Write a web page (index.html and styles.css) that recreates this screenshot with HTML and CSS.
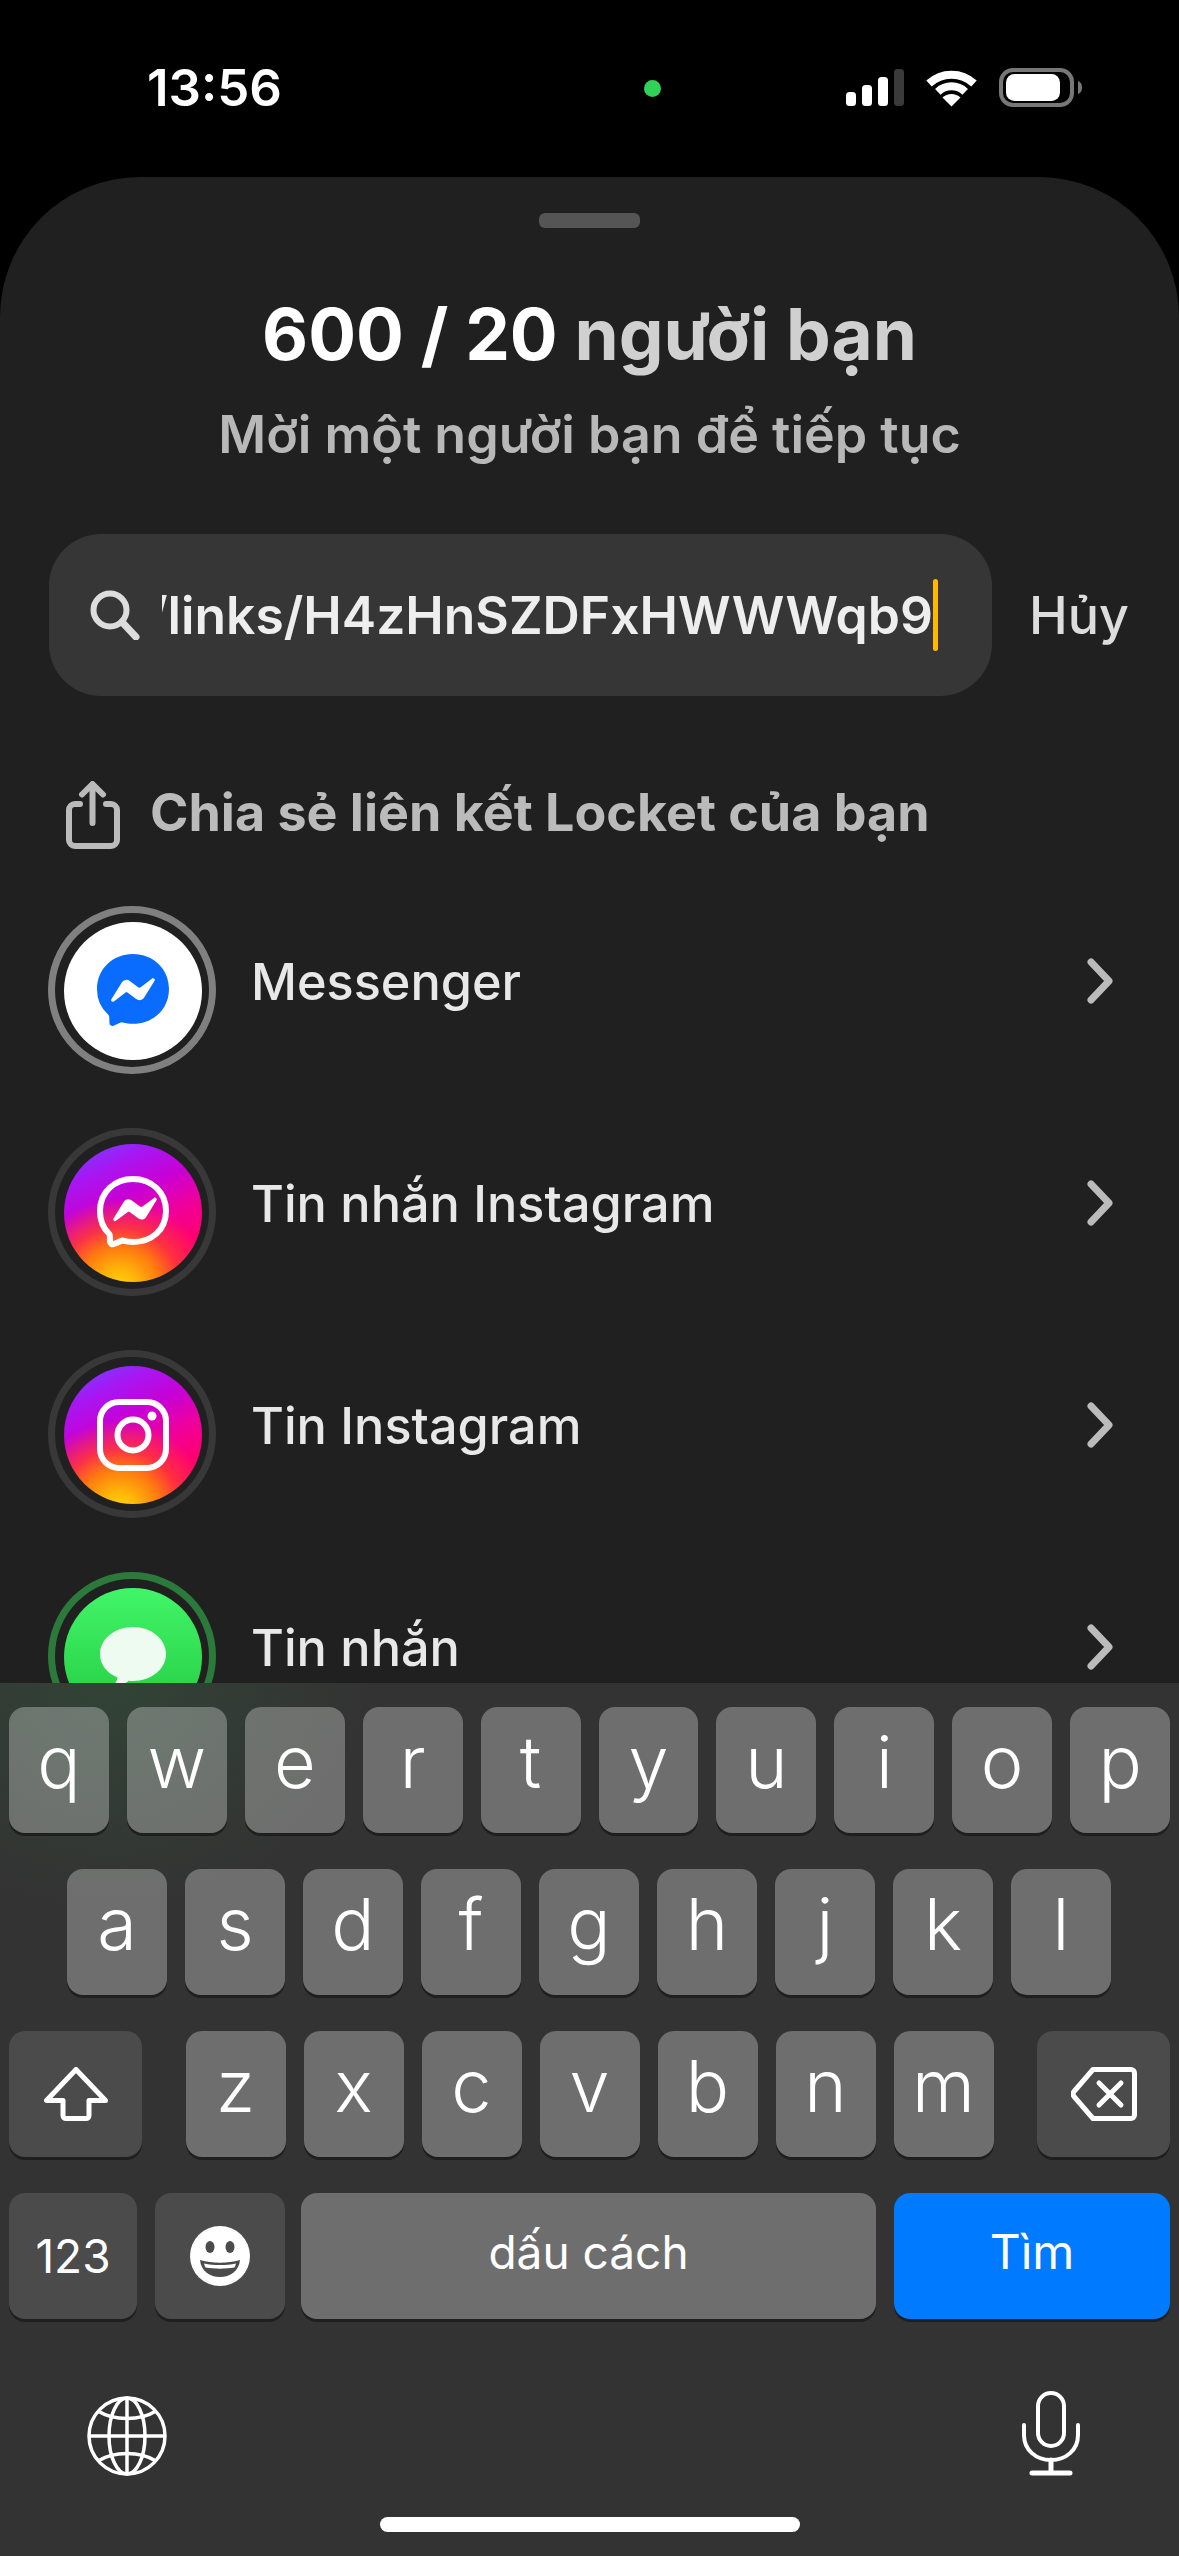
FILE: index.html
```html
<!DOCTYPE html>
<html lang="vi">
<head>
<meta charset="utf-8">
<title>Locket</title>
<link rel="stylesheet" href="styles.css">
</head>
<body>
<div class="page">
  <header class="status">
    <span class="time">13:56</span>
    <span class="dot"></span>
    <svg class="status-icons" width="240" height="45" viewBox="846 66 240 45">
      <rect x="846" y="92" width="10" height="14" rx="3.5" fill="#fff"/>
      <rect x="862" y="85" width="10" height="21" rx="3.5" fill="#fff"/>
      <rect x="878" y="77" width="10" height="29" rx="3.5" fill="#fff"/>
      <rect x="894" y="69" width="10" height="37" rx="3.5" fill="#3a3a3a"/>
      <g fill="none" stroke="#fff" stroke-width="8">
        <path d="M929 83.5a33 33 0 0 1 45 0"/>
        <path d="M937.8 91.8a20 20 0 0 1 27.4 0"/>
      </g>
      <path d="M951.5 106.5l-9-9a13 13 0 0 1 18 0z" fill="#fff"/>
      <rect x="1001" y="70" width="71" height="35" rx="12" fill="none" stroke="#777" stroke-width="4"/>
      <rect x="1006" y="74" width="54" height="27" rx="8.5" fill="#fff"/>
      <path d="M1078 81c3 1 4 3.500 4 6.500s-1 5.500-4 6.500z" fill="#777"/>
    </svg>
  </header>

  <main class="sheet">
    <div class="handle"></div>
    <h1 class="title"><span class="count">600 / 20</span> người bạn</h1>
    <p class="subtitle">Mời một người bạn để tiếp tục</p>

    <div class="search-row">
      <div class="search">
        <svg class="search-icon" width="50" height="50" viewBox="0 0 50 50">
          <circle cx="20" cy="20" r="16.500" fill="none" stroke="#ddd" stroke-width="6"/>
          <path d="M32 32l14 15" fill="none" stroke="#ddd" stroke-width="7" stroke-linecap="round"/>
        </svg>
        <div class="search-field"><span class="search-text">https://locket.camera/links/H4zHnSZDFxHWWWqb9</span></div>
        <span class="caret"></span>
      </div>
      <span class="cancel">Hủy</span>
    </div>

    <div class="share">
      <svg class="share-icon" width="54" height="68" viewBox="0 0 54 68">
        <path d="M14 23H9a6 6 0 0 0-6 6v30a6 6 0 0 0 6 6h36a6 6 0 0 0 6-6V29a6 6 0 0 0-6-6h-5" fill="none" stroke="#bbb" stroke-width="6" stroke-linecap="round"/>
        <path d="M26.500 42V4M16 13.500L26.500 3 37 13.500" fill="none" stroke="#bbb" stroke-width="6" stroke-linecap="round" stroke-linejoin="round"/>
      </svg>
      <span class="share-text">Chia sẻ liên kết Locket của bạn</span>
    </div>

    <ul class="apps">
      <li class="app">
        <div class="ring ring-grey"><div class="badge badge-white">
          <svg width="72" height="75" viewBox="0 0 24 25"><path fill="#0a6cff" fill-rule="evenodd" d="M.001 11.639C.001 4.949 5.241 0 12.001 0S24 4.95 24 11.639c0 6.689-5.24 11.638-12 11.638-1.21 0-2.38-.16-3.47-.46a.96.96 0 0 0-.64.05l-2.39 1.05a.96.96 0 0 1-1.35-.85l-.07-2.14a.97.97 0 0 0-.32-.68A11.39 11.389 0 0 1 .002 11.64zm8.32-2.19l-3.52 5.6c-.35.53.32 1.139.82.75l3.79-2.87c.25-.2.6-.2.86 0l2.8 2.1c.84.63 2.04.4 2.6-.48l3.52-5.6c.35-.53-.32-1.13-.82-.75l-3.79 2.87c-.25.2-.6.2-.86 0l-2.8-2.1a1.8 1.8 0 0 0-2.6.48z"/></svg>
        </div></div>
        <span class="app-name">Messenger</span>
        <svg class="chevron" width="32" height="50" viewBox="0 0 32 50"><path d="M4 6l18 19L4 44" fill="none" stroke="#bbb" stroke-width="7" stroke-linecap="round" stroke-linejoin="round"/></svg>
      </li>
      <li class="app">
        <div class="ring ring-dark"><div class="badge badge-ig">
          <svg width="72" height="75" viewBox="0 0 72 75"><path fill="none" stroke="#fff" stroke-width="6" d="M3 35C3 16 17.500 3 36 3s33 13 33 32-14.500 31-33 31c-3.500 0-6.500-.4-10-1.300a3 3 0 0 0-2 .2l-7 3.100c-2 .8-4-.4-4-2.400l-.2-6.200a3 3 0 0 0-1-2C5.500 51.500 3 43.500 3 35z"/><path fill="#fff" d="M16.500 42.500l10.500-17c1.600-2.500 5-3 7.500-1.300l8.500 6.300c.7.600 1.800.6 2.500 0l11.500-8.600c1.500-1.100 3.500.7 2.500 2.300l-10.500 17c-1.600 2.500-5 3-7.500 1.300l-8.500-6.300c-.7-.6-1.800-.6-2.500 0l-11.500 8.600c-1.500 1.100-3.500-.7-2.500-2.300z"/></svg>
        </div></div>
        <span class="app-name">Tin nhắn Instagram</span>
        <svg class="chevron" width="32" height="50" viewBox="0 0 32 50"><path d="M4 6l18 19L4 44" fill="none" stroke="#bbb" stroke-width="7" stroke-linecap="round" stroke-linejoin="round"/></svg>
      </li>
      <li class="app">
        <div class="ring ring-dark"><div class="badge badge-ig">
          <svg width="72" height="72" viewBox="0 0 72 72"><rect x="3" y="3" width="66" height="66" rx="19" fill="none" stroke="#fff" stroke-width="6"/><circle cx="36" cy="36" r="15.500" fill="none" stroke="#fff" stroke-width="6"/><circle cx="55" cy="17" r="4.500" fill="#fff"/></svg>
        </div></div>
        <span class="app-name">Tin Instagram</span>
        <svg class="chevron" width="32" height="50" viewBox="0 0 32 50"><path d="M4 6l18 19L4 44" fill="none" stroke="#bbb" stroke-width="7" stroke-linecap="round" stroke-linejoin="round"/></svg>
      </li>
      <li class="app">
        <div class="ring ring-green"><div class="badge badge-green">
          <svg width="66" height="66" viewBox="0 0 66 66"><path fill="#eefbf0" d="M33 0c18.200 0 33 12 33 27S51.200 54 33 54c-1.500 0-3-.1-4.500-.3C25 57 19 60 11 60c4-2.500 6-6 6.500-9.500C6.500 46 0 37.300 0 27 0 12 14.800 0 33 0z"/></svg>
        </div></div>
        <span class="app-name">Tin nhắn</span>
        <svg class="chevron" width="32" height="50" viewBox="0 0 32 50"><path d="M4 6l18 19L4 44" fill="none" stroke="#bbb" stroke-width="7" stroke-linecap="round" stroke-linejoin="round"/></svg>
      </li>
    </ul>
  </main>

  <section class="keyboard">
    <div class="kb-row kb-row-1">
      <div class="key">q</div><div class="key">w</div><div class="key">e</div><div class="key">r</div><div class="key">t</div><div class="key">y</div><div class="key">u</div><div class="key">i</div><div class="key">o</div><div class="key">p</div>
    </div>
    <div class="kb-row kb-row-2">
      <div class="key">a</div><div class="key">s</div><div class="key">d</div><div class="key">f</div><div class="key">g</div><div class="key">h</div><div class="key">j</div><div class="key">k</div><div class="key">l</div>
    </div>
    <div class="kb-row kb-row-3">
      <div class="key key-mod key-wide">
        <svg width="64" height="54" viewBox="0 0 64 54"><path d="M32 2.500L2.500 33.500H19v15a3 3 0 0 0 3 3h20a3 3 0 0 0 3-3v-15h16.500z" fill="none" stroke="#fff" stroke-width="5" stroke-linejoin="round"/></svg>
      </div>
      <div class="kb-letters">
        <div class="key">z</div><div class="key">x</div><div class="key">c</div><div class="key">v</div><div class="key">b</div><div class="key">n</div><div class="key">m</div>
      </div>
      <div class="key key-mod key-wide">
        <svg width="66" height="54" viewBox="0 0 66 54"><path d="M22 2.500h38a3.500 3.500 0 0 1 3.500 3.500v42a3.500 3.500 0 0 1-3.500 3.500H22L3 29.500a4 4 0 0 1 0-5z" fill="none" stroke="#fff" stroke-width="5" stroke-linejoin="round"/><path d="M28 16l22 22M50 16L28 38" fill="none" stroke="#fff" stroke-width="5" stroke-linecap="round"/></svg>
      </div>
    </div>
    <div class="kb-row kb-row-4">
      <div class="key key-mod key-num">123</div>
      <div class="key key-mod key-emoji">
        <svg width="60" height="60" viewBox="0 0 60 60"><ellipse cx="30" cy="30" rx="30" ry="30" fill="#fff"/><ellipse cx="20" cy="21" rx="4.500" ry="6" fill="#4b4b4b"/><ellipse cx="40" cy="21" rx="4.500" ry="6" fill="#4b4b4b"/><path d="M10 34c13 3.500 27 3.500 40 0-1 11-10 17-20 17s-19-6-20-17z" fill="#4b4b4b"/><path d="M14 37.500c10 2 22 2 32 0-.5 2-1 3-1.500 4-9 1.500-20 1.500-29 0-.5-1-1-2-1.500-4z" fill="#fff"/></svg>
      </div>
      <div class="key key-space">dấu cách</div>
      <div class="key key-go">Tìm</div>
    </div>
    <div class="kb-bottom">
      <svg width="80" height="80" viewBox="0 0 80 80">
        <g fill="none" stroke="#fff" stroke-width="3.500">
          <circle cx="40" cy="40" r="38"/>
          <ellipse cx="40" cy="40" rx="18" ry="38"/>
          <path d="M40 2v76M2 40h76"/>
          <path d="M11 15c16 10 42 10 58 0M11 65c16-10 42-10 58 0"/>
        </g>
      </svg>
      <svg width="58" height="85" viewBox="0 0 58 85">
        <g fill="none" stroke="#fff" stroke-width="4" stroke-linecap="round">
          <rect x="16" y="2" width="26" height="53" rx="13"/>
          <path d="M2 34v10c0 15 12 25 27 25s27-10 27-25V34"/>
          <path d="M29 69v13M10 82h38" stroke-width="5"/>
        </g>
      </svg>
    </div>
    <div class="home-bar"></div>
  </section>
</div>
</body>
</html>
```

FILE: styles.css
```css
* { box-sizing: border-box; }
html, body { margin: 0; padding: 0; background: #000; }
body { font-family: Inter, "Noto Sans", sans-serif; color: #fff; }

.page {
  width: 1179px;
  height: 2556px;
  display: flex;
  flex-direction: column;
  overflow: hidden;
  background: #000;
}

/* status bar */
.status {
  flex: 0 0 177px;
  display: flex;
  align-items: flex-start;
  padding-left: 147px;
}
.time {
  width: 133px;
  margin-top: 58px;
  font-size: 51px;
  line-height: 60px;
  font-weight: 600;
  white-space: nowrap;
}
.dot {
  width: 17px;
  height: 17px;
  margin: 80px 0 0 364px;
  border-radius: 50%;
  background: #30d158;
}
.status-icons { margin: 66px 0 0 185px; }

/* sheet */
.sheet {
  flex: 1;
  min-height: 0;
  overflow: hidden;
  display: flex;
  flex-direction: column;
  background: #202020;
  border-radius: 140px 140px 0 0;
}
.sheet > * { flex: none; }
.handle {
  width: 101px;
  height: 15px;
  margin: 36px auto 0;
  border-radius: 6px;
  background: #555;
}
.title {
  margin: 64px 0 0;
  text-align: center;
  font-size: 71px;
  line-height: 84px;
  font-weight: 700;
  color: #d0d0d0;
}
.count { color: #fff; }
.subtitle {
  margin: 29px 0 0;
  text-align: center;
  font-size: 52px;
  line-height: 60px;
  font-weight: 600;
  color: #b8b8b8;
}

/* search */
.search-row {
  display: flex;
  align-items: center;
  margin: 69px 0 0 49px;
}
.search {
  width: 943px;
  height: 162px;
  display: flex;
  align-items: center;
  padding: 0 54px 0 41px;
  background: #363636;
  border-radius: 52px;
}
.search-icon { flex: none; margin: 0 22px 0 0; }
.search-field {
  flex: 1;
  min-width: 0;
  display: flex;
  justify-content: flex-end;
  overflow: hidden;
}
.search-text {
  flex: none;
  font-size: 51.6px;
  line-height: 72px;
  font-weight: 600;
  color: #eee;
  white-space: nowrap;
}
.caret {
  flex: none;
  width: 5px;
  height: 72px;
  border-radius: 3px;
  background: #ffb800;
}
.cancel {
  margin-left: 37px;
  font-size: 52px;
  font-weight: 500;
  color: #ddd;
  white-space: nowrap;
}

/* share */
.share {
  display: flex;
  align-items: center;
  margin: 85px 0 0 66px;
  height: 68px;
}
.share-icon { flex: none; }
.share-text {
  margin: 0 0 6px 30px;
  font-size: 52px;
  font-weight: 700;
  color: #bbb;
  white-space: nowrap;
}

/* app list */
.apps {
  list-style: none;
  margin: 57px 0 0;
  padding: 0 0 0 48px;
  display: flex;
  flex-direction: column;
  gap: 54px;
}
.app {
  flex: none;
  display: flex;
  align-items: center;
  height: 168px;
  padding-right: 60px;
}
.ring {
  flex: none;
  width: 168px;
  height: 168px;
  border-radius: 50%;
  padding: 8px;
  border: 7px solid #383838;
}
.ring-grey { border-color: #808080; }
.ring-dark { border-color: #383838; }
.ring-green { border-color: #2b7a3b; }
.badge {
  width: 138px;
  height: 138px;
  margin: -1px;
  border-radius: 50%;
  display: flex;
  align-items: center;
  justify-content: center;
}
.ring .badge { margin: 1px; }
.badge-white { background: #fff; }
.badge-ig {
  background:
    radial-gradient(circle at 40% 105%, #ffdc0a 0%, #ffb308 12%, #ff7a10 25%, rgba(255, 60, 50, .8) 37%, rgba(255, 0, 120, 0) 54%),
    linear-gradient(155deg, #7a3cff 6%, #a816f2 22%, #c800d4 40%, #f0009a 58%, #ff0070 76%);
}
.badge-green {
  align-items: flex-start;
  padding-top: 39px;
  background: linear-gradient(180deg, #42f568 0%, #22c93f 100%);
}
.app-name {
  flex: 1;
  margin: 0 0 18px 35px;
  font-size: 50.4px;
  font-weight: 500;
  color: #e8e8e8;
  white-space: nowrap;
}
.chevron { flex: none; margin-bottom: 18px; }

/* keyboard */
.keyboard {
  flex: 0 0 873px;
  padding: 24px 9px 0;
  background:
    radial-gradient(ellipse 260px 230px at 110px 0, rgba(40, 200, 80, .11), rgba(40, 200, 80, 0)),
    #333;
}
.kb-row { display: flex; gap: 18px; height: 126px; margin-bottom: 36px; }
.kb-row-1 .key { flex: 1; width: auto; }
.kb-row-2 { padding-left: 58px; }
.kb-row-3 { justify-content: space-between; }
.kb-row-4 { margin-bottom: 0; }
.kb-letters { display: flex; gap: 18px; }
.key {
  flex: none;
  width: 100px;
  height: 100%;
  display: flex;
  align-items: center;
  justify-content: center;
  padding-bottom: 17px;
  border-radius: 16px;
  background: rgba(255, 255, 255, .29);
  box-shadow: 0 3px 0 #1f1f1f;
  font-size: 72px;
  line-height: 1;
  font-weight: 300;
  color: #fff;
}
.key-mod { background: #4b4b4b; padding-bottom: 0; }
.key-wide { width: 133px; }
.key-num { width: 128px; font-size: 46px; font-weight: 400; }
.key-emoji { width: 130px; }
.key-space { width: 575px; margin-left: -2px; font-size: 46px; font-weight: 400; padding-bottom: 8px; }
.key-go { width: 276px; font-size: 48px; font-weight: 400; padding-bottom: 8px; background: #007aff; }
.kb-bottom {
  display: flex;
  justify-content: space-between;
  align-items: flex-end;
  margin-top: 72px;
  padding: 0 90px 0 78px;
}
.home-bar {
  width: 420px;
  height: 15px;
  margin: 41px auto 0;
  border-radius: 8px;
  background: #fff;
}
```
